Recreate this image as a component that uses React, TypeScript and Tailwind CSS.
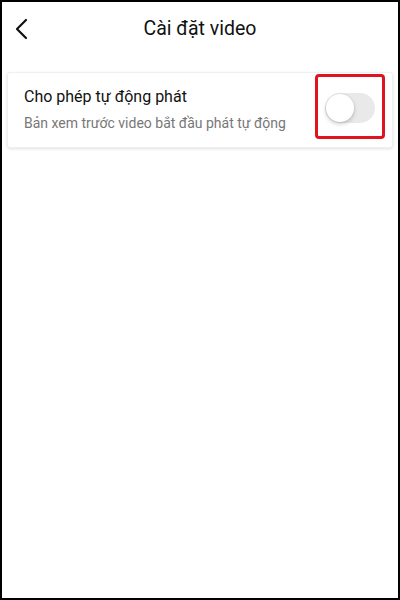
import { useState } from "react";

function BackIcon() {
  return (
    <svg width="14" height="22" viewBox="0 0 14 22" fill="none">
      <path d="M11 2 L2 11 L11 20" stroke="#111" strokeWidth="2.2" strokeLinecap="round" strokeLinejoin="round" />
    </svg>
  );
}

function Toggle({ on, onChange }: { on: boolean; onChange: (v: boolean) => void }) {
  return (
    <button
      onClick={() => onChange(!on)}
      className={`relative h-[30px] w-[50px] rounded-full transition-colors ${on ? "bg-[#34c759]" : "bg-[#e9e9ea]"}`}
    >
      <span
        className={`absolute top-[1px] h-[28px] w-[28px] rounded-full bg-white shadow-[0_2px_4px_rgba(0,0,0,0.2),0_0_0_0.5px_rgba(0,0,0,0.06)] transition-all ${on ? "left-[21px]" : "left-[1px]"}`}
      />
    </button>
  );
}

export default function App() {
  const [autoplay, setAutoplay] = useState(false);

  return (
    <div className="box-border h-[600px] w-[400px] border-2 border-black bg-white font-['Roboto',sans-serif]">
      <header className="flex h-[54px] items-center px-[13px]">
        <button className="flex h-8 w-8 items-center">
          <BackIcon />
        </button>
        <h1 className="flex-1 pr-8 text-center text-[19.5px] text-[#111]">Cài đặt video</h1>
      </header>

      <div className="mx-[5px] mt-[16px] flex items-start rounded-[3px] border border-[#f0f0f0] bg-white pl-[16px] pr-[7px] shadow-[0_1px_3px_rgba(0,0,0,0.12)]">
        <div className="flex-1 pt-[13px] pb-[14px]">
          <div className="text-[16px] leading-[22px] text-[#111]">Cho phép tự động phát</div>
          <div className="mt-[5px] text-[14px] leading-[20px] text-[#777]">
            Bản xem trước video bắt đầu phát tự động
          </div>
        </div>
        <div className="mt-[1px] flex h-[65px] w-[70px] items-center justify-center rounded-[4px] border-[3px] border-[#e0141e] pt-[2px]">
          <Toggle on={autoplay} onChange={setAutoplay} />
        </div>
      </div>
    </div>
  );
}
